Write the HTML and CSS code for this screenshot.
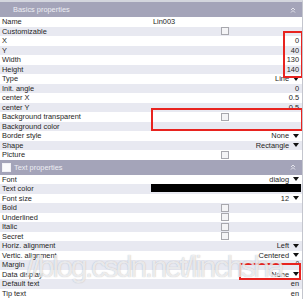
FILE: index.html
```html
<!DOCTYPE html>
<html lang="en">
<head>
    <meta charset="UTF-8">
    <title>Properties</title>
    <link rel="stylesheet" href="styles.css">
</head>
<body>
<div class="panel">

    <!-- Basics -->
    <div class="section-head">
        <span class="head-title">Basics properties</span>
        <svg class="collapse" width="6" height="6" viewBox="0 0 6 6"><path d="M1 3 L3 1 L5 3 M1 5.5 L3 3.5 L5 5.5" fill="none" stroke="#e4e4ec" stroke-width="1"/></svg>
    </div>
    <div class="row"><span class="label">Name</span><span class="value left">Lin003</span></div>
    <div class="row"><span class="label">Customizable</span><span class="value center"><i class="box"></i></span></div>
    <div class="row"><span class="label">X</span><span class="value">0</span></div>
    <div class="row"><span class="label">Y</span><span class="value">40</span></div>
    <div class="row"><span class="label">Width</span><span class="value">130</span></div>
    <div class="row"><span class="label">Height</span><span class="value">140</span></div>
    <div class="row"><span class="label">Type</span><span class="value">Line<i class="arrow"></i></span></div>
    <div class="row"><span class="label">Init. angle</span><span class="value">0</span></div>
    <div class="row"><span class="label">center X</span><span class="value">0.5</span></div>
    <div class="row"><span class="label">center Y</span><span class="value">0.5</span></div>
    <div class="row"><span class="label">Background transparent</span><span class="value center"><i class="box"></i></span></div>
    <div class="row"><span class="label">Background color</span><span class="value"></span></div>
    <div class="row"><span class="label">Border style</span><span class="value">None<i class="arrow"></i></span></div>
    <div class="row"><span class="label">Shape</span><span class="value">Rectangle<i class="arrow"></i></span></div>
    <div class="row"><span class="label">Picture</span><span class="value center"><i class="box"></i></span></div>

    <!-- Text -->
    <div class="section-head">
        <i class="head-box"></i>
        <span class="head-title">Text properties</span>
        <svg class="collapse" width="6" height="6" viewBox="0 0 6 6"><path d="M1 3 L3 1 L5 3 M1 5.5 L3 3.5 L5 5.5" fill="none" stroke="#e4e4ec" stroke-width="1"/></svg>
    </div>
    <div class="row"><span class="label">Font</span><span class="value">dialog<i class="arrow"></i></span></div>
    <div class="row"><span class="label">Text color</span><span class="value swatch"></span></div>
    <div class="row"><span class="label">Font size</span><span class="value">12<i class="arrow"></i></span></div>
    <div class="row"><span class="label">Bold</span><span class="value center"><i class="box"></i></span></div>
    <div class="row"><span class="label">Underlined</span><span class="value center"><i class="box"></i></span></div>
    <div class="row"><span class="label">Italic</span><span class="value center"><i class="box"></i></span></div>
    <div class="row"><span class="label">Secret</span><span class="value center"><i class="box"></i></span></div>
    <div class="row"><span class="label">Horiz. alignment</span><span class="value">Left<i class="arrow"></i></span></div>
    <div class="row"><span class="label">Vertic. alignment</span><span class="value">Centered<i class="arrow"></i></span></div>
    <div class="row"><span class="label">Margin</span><span class="value small">0</span></div>
    <div class="row"><span class="label">Data display</span><span class="value">None<i class="arrow"></i></span></div>
    <div class="row"><span class="label">Default text</span><span class="value">en</span></div>
    <div class="row"><span class="label">Tip text</span><span class="value">en</span></div>

    <!-- annotations -->
    <div class="mark mark-pos"></div>
    <div class="mark mark-bg"></div>
    <div class="mark mark-data"></div>
    <div class="watermark">//blog.csdn.net/linchsha</div>
</div>
</body>
</html>
```

FILE: styles.css
```css
body {
    margin: 0;
    background: #ffffff;
    font-family: "Liberation Sans", Arial, sans-serif;
    font-size: 7.4px;
    color: #1e1e24;
}
.panel {
    position: relative;
    width: 303px;
    height: 299px;
    overflow: hidden;
    border-top: 2px solid #d4d6de;
    box-sizing: border-box;
    border-right: 1px solid #c4c6ce;
}
.section-head {
    display: flex;
    align-items: center;
    height: 15px;
    background: #a4a4b9;
    color: #eeeef4;
    padding-left: 13px;
    padding-right: 6px;
}
.head-title {
    flex: 1;
}
.head-box {
    width: 7px;
    height: 7px;
    border: 1px solid #f2f2f6;
    background: #fbfbfd;
    margin-left: -11px;
    margin-right: 3px;
}
.collapse {
    display: block;
}
.row {
    display: flex;
    height: 9.5px;
    line-height: 9.5px;
    background: #ffffff;
}
.row:nth-of-type(odd) {
    background: #e8e9f1;
}
.label {
    width: 149px;
    padding-left: 2px;
    white-space: nowrap;
}
.value {
    flex: 1;
    display: flex;
    align-items: center;
    justify-content: flex-end;
    padding-right: 3px;
    white-space: nowrap;
}
.value.left {
    justify-content: flex-start;
    padding-left: 2px;
}
.value.center {
    justify-content: center;
}
.value.small {
    align-items: flex-start;
    line-height: 6px;
    font-size: 6px;
}
.value.swatch {
    background: #000000;
    margin: 0 1px 1.5px 0;
}
.box {
    width: 6px;
    height: 6px;
    border: 1px solid #a8a8ae;
    background: #f4f4f6;
}
.arrow {
    width: 0;
    height: 0;
    margin-left: 4px;
    border-left: 3px solid transparent;
    border-right: 3px solid transparent;
    border-top: 4px solid #111111;
}
.mark {
    position: absolute;
    border: 2px solid #e8231f;
    box-sizing: border-box;
}
.mark-pos {
    left: 283px;
    top: 29px;
    width: 20px;
    height: 47px;
}
.mark-bg {
    left: 151px;
    top: 106px;
    width: 152px;
    height: 23px;
}
.mark-data {
    left: 239px;
    top: 261px;
    width: 62px;
    height: 17px;
}
.watermark {
    position: absolute;
    left: 26px;
    top: 248px;
    font-size: 30px;
    letter-spacing: -2.4px;
    color: rgba(255, 255, 255, 0.72);
    text-shadow: 0 0 1px rgba(120, 120, 130, 0.55);
    white-space: nowrap;
    pointer-events: none;
}
```
